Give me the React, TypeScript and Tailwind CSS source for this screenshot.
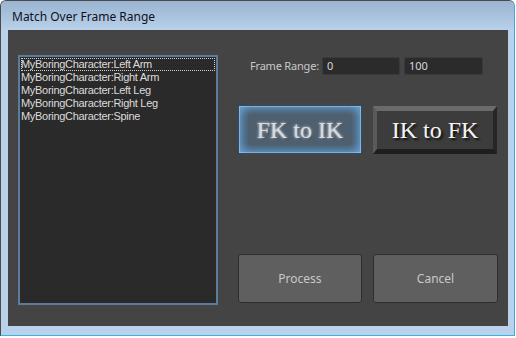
import React from "react";

const ui = { fontFamily: '"Noto Sans", "Open Sans", sans-serif' };
const listFont = { fontFamily: '"Liberation Sans", Arial, sans-serif' };
const serif = { fontFamily: '"Liberation Serif", "Times New Roman", serif' };

const items = [
  "MyBoringCharacter:Left Arm",
  "MyBoringCharacter:Right Arm",
  "MyBoringCharacter:Left Leg",
  "MyBoringCharacter:Right Leg",
  "MyBoringCharacter:Spine",
];

export default function App() {
  return (
    <div className="w-[516px] h-[338px] bg-white" style={ui}>
      <div className="w-[515px] h-[336px] flex flex-col rounded-t-[6px] border-l border-t border-[#4a4a4a] border-r border-r-[#3aa8d8] border-b border-b-[#35b4dc] bg-[#b9d1ea] overflow-hidden">
        <div className="h-[29px] shrink-0 flex items-center pl-[11px] pt-[2px] bg-gradient-to-b from-[#99b4d1] to-[#b9d1ea] text-[12px] text-[#101020]">
          Match Over Frame Range
        </div>
        <div className="ml-[7px] w-[500px] h-[296px] shrink-0 bg-[#444444] flex px-[10px] pt-[25px]">
          <div
            className="w-[200px] h-[250px] shrink-0 border-2 border-[#5d7c9c] bg-[#2a2a2a] pt-[1px] px-[1px] overflow-hidden"
            style={listFont}
          >
            {items.map((t, i) => (
              <div
                key={t}
                className={`h-[13px] leading-[13px] text-[11px] tracking-[-0.3px] text-[#dcdcdc] whitespace-nowrap ${
                  i === 0 ? "outline outline-1 outline-dotted outline-[#cfcfcf] -outline-offset-1" : ""
                }`}
              >
                {t}
              </div>
            ))}
          </div>
          <div className="ml-[20px] w-[260px] shrink-0 flex flex-col">
            <div className="mt-[2px] flex items-center pl-[12px]">
              <span className="text-[11px] tracking-[-0.2px] text-[#c8c8c8] w-[66px] whitespace-nowrap">Frame Range:</span>
              <div className="ml-[6px] w-[78px] h-[18px] bg-[#2b2b2b] border border-[#3a3a3a] rounded-[2px] text-[11px] text-[#d8d8d8] pl-[4px] leading-[16px]">
                0
              </div>
              <div className="ml-[4px] w-[79px] h-[18px] bg-[#2b2b2b] border border-[#3a3a3a] rounded-[2px] text-[11px] text-[#d8d8d8] pl-[4px] leading-[16px]">
                100
              </div>
            </div>
            <div className="mt-[30px] flex gap-[11px]">
              <div
                className="w-[124px] h-[49px] flex items-center justify-center border border-[#2c4a66] bg-[#4d7aa0] shadow-[inset_0_0_0_1px_#8cc0ea,inset_0_0_10px_4px_#6aa2d0]"
                style={serif}
              >
                <div className="w-[104px] h-[31px] bg-[#4e5f70] shadow-[0_0_8px_4px_#4e5f70] flex items-center justify-center">
                  <span className="text-[24px] text-[#d6dbe0] [text-shadow:0_0_3px_#ffffff,1px_1px_2px_#1a2530]">FK to IK</span>
                </div>
              </div>
              <div
                className="w-[124px] h-[48px] mt-[1px] flex items-center justify-center bg-[#3c3c3c] border-t-[5px] border-t-[#6a6a6a] border-l-[4px] border-l-[#5a5a5a] border-r-[4px] border-r-[#262626] border-b-[5px] border-b-[#1e1e1e]"
                style={serif}
              >
                <span className="text-[24px] text-[#f4f4f4] [text-shadow:2px_2px_2px_#101010]">IK to FK</span>
              </div>
            </div>
            <div className="mt-[100px] flex gap-[11px]">
              <div className="w-[124px] h-[49px] flex items-center justify-center bg-[#5f5f5f] border border-[#2e2e2e] rounded-[3px] text-[12px] text-[#c8c8c8]">
                Process
              </div>
              <div className="w-[125px] h-[49px] flex items-center justify-center bg-[#5f5f5f] border border-[#2e2e2e] rounded-[3px] text-[12px] text-[#c8c8c8]">
                Cancel
              </div>
            </div>
          </div>
        </div>
      </div>
    </div>
  );
}
